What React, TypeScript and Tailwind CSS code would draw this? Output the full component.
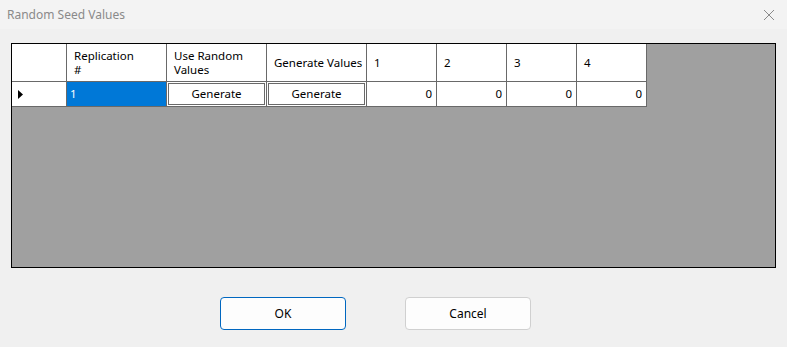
import React from "react";

const font = { fontFamily: '"Segoe UI", "Noto Sans", "Open Sans", sans-serif' };

function HeaderCell({ w, children }: { w: string; children?: React.ReactNode }) {
  return (
    <div className={`${w} h-full shrink-0 border-r border-[#696969] bg-white flex items-center pl-[7px] pr-1 text-[11.5px] leading-[16px] text-black whitespace-nowrap`}>
      {children}
    </div>
  );
}

function GenBtn() {
  return (
    <div className="w-[100px] h-full shrink-0 border-r border-[#696969] bg-white p-[1px]">
      <div className="w-full h-full border border-[#696969] flex items-center justify-center text-[11.5px] text-black">
        Generate
      </div>
    </div>
  );
}

function NumCell() {
  return (
    <div className="w-[70px] h-full shrink-0 border-r border-[#696969] bg-white flex items-center justify-end pr-[4px] text-[11.5px] text-black">
      0
    </div>
  );
}

export default function App() {
  return (
    <div className="w-[787px] h-[347px] bg-[#f0f0f0] flex flex-col" style={font}>
      <div className="h-[29px] bg-[#f3f3f3] flex items-center justify-between pl-[7px] pr-[12px] shrink-0">
        <span className="text-[12px] text-[#8a8a8a]">Random Seed Values</span>
        <svg width="12" height="12" viewBox="0 0 12 12">
          <path d="M1 1 L11 11 M11 1 L1 11" stroke="#8a8a8a" strokeWidth="1" />
        </svg>
      </div>
      <div className="pl-[11px] pr-[11px] pt-[14px]">
        <div className="h-[225px] w-[765px] border border-black bg-[#a0a0a0] flex flex-col items-start">
          <div className="h-[38px] flex border-b border-[#696969]">
            <HeaderCell w="w-[55px]" />
            <HeaderCell w="w-[100px]">
              <div className="flex flex-col">
                <span className="block h-[14px] leading-[14px]">Replication</span>
                <span className="block h-[14px] leading-[14px]">#</span>
              </div>
            </HeaderCell>
            <HeaderCell w="w-[100px]">
              <div className="flex flex-col">
                <span className="block h-[14px] leading-[14px]">Use Random</span>
                <span className="block h-[14px] leading-[14px]">Values</span>
              </div>
            </HeaderCell>
            <HeaderCell w="w-[100px]">Generate Values</HeaderCell>
            <HeaderCell w="w-[70px]">1</HeaderCell>
            <HeaderCell w="w-[70px]">2</HeaderCell>
            <HeaderCell w="w-[70px]">3</HeaderCell>
            <HeaderCell w="w-[70px]">4</HeaderCell>
          </div>
          <div className="h-[25px] flex border-b border-[#696969]">
            <div className="w-[55px] h-full shrink-0 border-r border-[#696969] bg-white flex items-center pl-[6px]">
              <svg width="5" height="9" viewBox="0 0 5 9">
                <path d="M0 0 L5 4.5 L0 9 Z" fill="#000" />
              </svg>
            </div>
            <div className="w-[100px] h-full shrink-0 border-r border-[#696969] bg-[#0078d7] flex items-center pl-[3px] text-[11.5px] text-white">
              1
            </div>
            <GenBtn />
            <GenBtn />
            <NumCell />
            <NumCell />
            <NumCell />
            <NumCell />
          </div>
        </div>
      </div>
      <div className="flex justify-start pl-[220px] pt-[29px] gap-[59px]">
        <button className="w-[126px] h-[33px] rounded-[4px] border border-[#0067c0] bg-[#fdfdfd] text-[12px] text-black">
          OK
        </button>
        <button className="w-[126px] h-[33px] rounded-[4px] border border-[#d0d0d0] bg-[#fdfdfd] text-[12px] text-black">
          Cancel
        </button>
      </div>
    </div>
  );
}
